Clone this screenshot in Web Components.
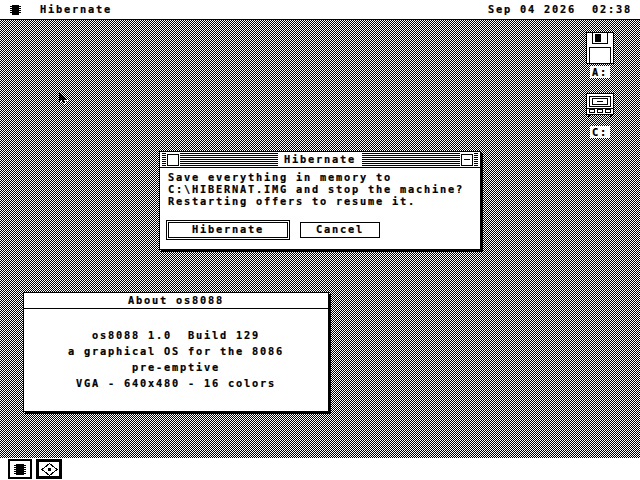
<!DOCTYPE html>
<html>
<head>
<meta charset="utf-8">
<title>os8088</title>
<style>
  html, body { margin: 0; height: 100%; overflow: hidden; background: #fff; }
  body { font: bold 10.3px/12px "DejaVu Sans Mono", monospace; letter-spacing: 1.8px; -webkit-text-stroke: 0.2px #000; color: #000; }
</style>
</head>
<body>
<os-screen>
  <os-menubar slot="top" title="Hibernate" date="Sep 04 2026" time="02:38"></os-menubar>

  <os-drive label="A:" kind="floppy"></os-drive>
  <os-drive label="C:" kind="hdd"></os-drive>

  <os-window slot="free" caption="Hibernate" gadgets style="left:159px;top:131px;width:322px;height:99px">
    <os-alert>
      <div>Save everything in memory to</div>
      <div>C:\HIBERNAT.IMG and stop the machine?</div>
      <div>Restarting offers to resume it.</div>
      <os-button slot="actions" default style="width:124px">Hibernate</os-button>
      <os-button slot="actions" style="width:80px">Cancel</os-button>
    </os-alert>
  </os-window>

  <os-window slot="free" caption="About os8088" style="left:23px;top:272px;width:306px;height:120px">
    <os-about>
      <div>os8088 1.0  Build 129</div>
      <div>a graphical OS for the 8086</div>
      <div>pre-emptive</div>
      <div>VGA - 640x480 - 16 colors</div>
    </os-about>
  </os-window>

  <svg slot="free" style="position:absolute;left:59px;top:72px" width="10" height="14" viewBox="0 0 10 14" shape-rendering="crispEdges">
    <path fill="#fff" transform="translate(1 1)" d="M0 0h1v1h1v1h1v1h1v1h1v1h1v1h1v1h1v1H5v1h1v2H4v-2H3v-1H2v1H1v1H0z"/>
    <path fill="#000" d="M0 0h1v1h1v1h1v1h1v1h1v1h1v1h1v1h1v1H5v1h1v2H4v-2H3v-1H2v1H1v1H0z"/>
  </svg>

  <os-taskbar slot="bottom">
    <os-task kind="chip"></os-task>
    <os-task kind="diamond" active></os-task>
  </os-taskbar>
</os-screen>

<script>
const chipIcon = `
  <svg width="11" height="10" viewBox="0 0 11 10" shape-rendering="crispEdges">
    <path fill="#000" d="M2 0h7v10H2z"/>
    <path fill="#000" d="M0 1h11v1H0zM0 3h11v1H0zM0 5h11v1H0zM0 7h11v1H0z"/>
  </svg>`;

const driveIcons = {
  floppy: `
    <svg width="28" height="32" viewBox="0 0 28 32" shape-rendering="crispEdges">
      <path fill="#000" d="M0 0h28v32H0z"/>
      <path fill="#fff" d="M1 1h26v30H1z"/>
      <path fill="#000" d="M6 1h16v11H6z"/>
      <path fill="#fff" d="M7 1h14v10H7z"/>
      <path fill="#000" d="M9 2h6v8H9z"/>
      <path fill="#000" d="M3 15h22v16H3z"/>
      <path fill="#fff" d="M4 16h20v15H4z"/>
    </svg>`,
  hdd: `
    <svg width="28" height="24" viewBox="0 0 28 24" shape-rendering="crispEdges">
      <path fill="#000" d="M0 0h28v22H0zM2 22h2v2H2zM24 22h2v2h-2z"/>
      <path fill="#fff" d="M1 1h26v20H1z"/>
      <path fill="#000" d="M3 3h22v11H3z"/>
      <path fill="#fff" d="M4 4h20v9H4z"/>
      <path fill="#000" d="M6 5h16v7H6z"/>
      <path fill="#fff" d="M7 6h14v5H7z"/>
      <path fill="#000" d="M11 8h6v1h-6z"/>
      <path fill="#000" d="M1 15h26v1H1zM3 16h6v4H3zM11 16h6v4h-6zM19 16h6v4h-6z"/>
      <path fill="#fff" d="M4 17h4v2H4zM12 17h4v2h-4zM20 17h4v2h-4z"/>
    </svg>`,
};

class OsScreen extends HTMLElement {
  constructor() {
    super();
    this.attachShadow({ mode: "open" });
    this.shadowRoot.innerHTML = `
      <style>
        :host { display: flex; flex-direction: column; width: 640px; height: 480px; overflow: hidden; }
        .desk {
          position: relative;
          flex: 1;
          display: flex;
          flex-direction: column;
          align-items: flex-end;
          gap: 15px;
          padding: 12px 26px 0 0;
          background: repeating-conic-gradient(#000 0 25%, #fff 0 50%) 0 0 / 2px 2px;
        }
      </style>
      <slot name="top"></slot>
      <div class="desk"><slot></slot><slot name="free"></slot></div>
      <slot name="bottom"></slot>
    `;
  }
}

class OsMenubar extends HTMLElement {
  constructor() {
    super();
    this.attachShadow({ mode: "open" });
  }

  connectedCallback() {
    this.shadowRoot.innerHTML = `
      <style>
        :host {
          display: flex;
          align-items: center;
          height: 19px;
          padding: 0 8px 0 10px;
          background: #fff;
          border-bottom: 1px solid #000;
          white-space: pre;
        }
        svg { display: block; }
        span { padding-bottom: 2px; }
        .title { margin-left: 19px; }
        .date { margin-left: auto; }
        .time { margin-left: 16px; }
      </style>
      ${chipIcon}
      <span class="title">${this.getAttribute("title")}</span>
      <span class="date">${this.getAttribute("date")}</span>
      <span class="time">${this.getAttribute("time")}</span>
    `;
  }
}

class OsDrive extends HTMLElement {
  constructor() {
    super();
    this.attachShadow({ mode: "open" });
  }

  connectedCallback() {
    const gap = this.getAttribute("kind") === "hdd" ? 9 : 2;
    this.shadowRoot.innerHTML = `
      <style>
        :host { display: flex; flex-direction: column; align-items: center; width: 28px; }
        svg { display: block; }
        span { display: block; width: 20px; height: 12px; margin-top: ${gap}px; background: #fff; text-align: center; }
      </style>
      ${driveIcons[this.getAttribute("kind")]}
      <span>${this.getAttribute("label")}</span>
    `;
  }
}

class OsWindow extends HTMLElement {
  constructor() {
    super();
    this.attachShadow({ mode: "open" });
  }

  connectedCallback() {
    const caption = this.getAttribute("caption");
    const gadgets = this.hasAttribute("gadgets");
    const stripes = (w) => `<i class="stripes" style="${w ? `width:${w}px` : "flex:1"}"></i>`;
    this.shadowRoot.innerHTML = `
      <style>
        :host {
          position: absolute;
          box-sizing: border-box;
          display: flex;
          flex-direction: column;
          background: #fff;
          border: 1px solid #000;
          box-shadow: 2px 2px 0 #000;
        }
        .bar {
          display: flex;
          align-items: center;
          justify-content: center;
          box-sizing: border-box;
          height: 16px;
          padding: 0 2px;
          border-bottom: 1px solid #000;
          gap: 1px;
        }
        .stripes {
          height: 13px;
          background: repeating-linear-gradient(#000 0 1px, #fff 1px 2px);
        }
        .box { box-sizing: border-box; width: 12px; height: 12px; border: 1px solid #000; position: relative; }
        .box.min::after { content: ""; position: absolute; left: 2px; right: 2px; top: 4px; height: 1px; background: #000; }
        .cap { padding: 0 5px 2px; white-space: pre; }
        .body { flex: 1; display: flex; }
      </style>
      <div class="bar">
        ${gadgets ? stripes(4) + '<i class="box"></i>' + stripes() : ""}
        <span class="cap">${caption}</span>
        ${gadgets ? stripes() + '<i class="box min"></i>' + stripes(4) : ""}
      </div>
      <div class="body"><slot></slot></div>
    `;
  }
}

class OsAlert extends HTMLElement {
  constructor() {
    super();
    this.attachShadow({ mode: "open" });
    this.shadowRoot.innerHTML = `
      <style>
        :host { display: block; flex: 1; padding: 3px 8px 0 8px; }
        ::slotted(div) { white-space: pre; }
        .actions { display: flex; align-items: center; gap: 10px; margin: 13px 0 0 -2px; }
      </style>
      <slot></slot>
      <div class="actions"><slot name="actions"></slot></div>
    `;
  }
}

class OsButton extends HTMLElement {
  constructor() {
    super();
    this.attachShadow({ mode: "open" });
    this.shadowRoot.innerHTML = `
      <style>
        :host {
          display: flex;
          align-items: center;
          justify-content: center;
          box-sizing: border-box;
          height: 16px;
          padding-bottom: 2px;
          background: #fff;
          border: 1px solid #000;
        }
        :host([default]) {
          height: 20px;
          box-shadow: inset 0 0 0 1px #fff, inset 0 0 0 2px #000;
        }
      </style>
      <slot></slot>
    `;
  }
}

class OsAbout extends HTMLElement {
  constructor() {
    super();
    this.attachShadow({ mode: "open" });
    this.shadowRoot.innerHTML = `
      <style>
        :host {
          display: flex;
          flex-direction: column;
          flex: 1;
          padding-top: 18px;
          text-align: center;
          line-height: 16px;
        }
        ::slotted(div) { white-space: pre; }
      </style>
      <slot></slot>
    `;
  }
}

class OsTaskbar extends HTMLElement {
  constructor() {
    super();
    this.attachShadow({ mode: "open" });
    this.shadowRoot.innerHTML = `
      <style>
        :host { display: flex; gap: 4px; height: 22px; box-sizing: border-box; padding: 1px 8px; background: #fff; }
      </style>
      <slot></slot>
    `;
  }
}

class OsTask extends HTMLElement {
  constructor() {
    super();
    this.attachShadow({ mode: "open" });
  }

  connectedCallback() {
    const diamond = `
      <svg width="17" height="13" viewBox="0 0 17 13" shape-rendering="crispEdges">
        <polygon fill="#fff" stroke="#000" points="8.5,0.5 16,6.5 8.5,12.5 1,6.5"/>
        <path fill="#000" d="M7 5h3v3H7z"/>
      </svg>`;
    const chip = `
      <svg width="12" height="11" viewBox="0 0 12 11" shape-rendering="crispEdges">
        <path fill="#000" d="M2 0h8v11H2z"/>
        <path fill="#000" d="M0 1h12v1H0zM0 3h12v1H0zM0 5h12v1H0zM0 7h12v1H0zM0 9h12v1H0z"/>
      </svg>`;
    this.shadowRoot.innerHTML = `
      <style>
        :host {
          display: flex;
          align-items: center;
          justify-content: center;
          box-sizing: border-box;
          width: 24px;
          height: 20px;
          border: 2px solid #000;
          background: #fff;
        }
        :host([active]) { width: 26px; border-width: 3px; }
        svg { display: block; }
      </style>
      ${this.getAttribute("kind") === "diamond" ? diamond : chip}
    `;
  }
}

customElements.define("os-screen", OsScreen);
customElements.define("os-menubar", OsMenubar);
customElements.define("os-drive", OsDrive);
customElements.define("os-window", OsWindow);
customElements.define("os-alert", OsAlert);
customElements.define("os-button", OsButton);
customElements.define("os-about", OsAbout);
customElements.define("os-taskbar", OsTaskbar);
customElements.define("os-task", OsTask);
</script>
</body>
</html>
